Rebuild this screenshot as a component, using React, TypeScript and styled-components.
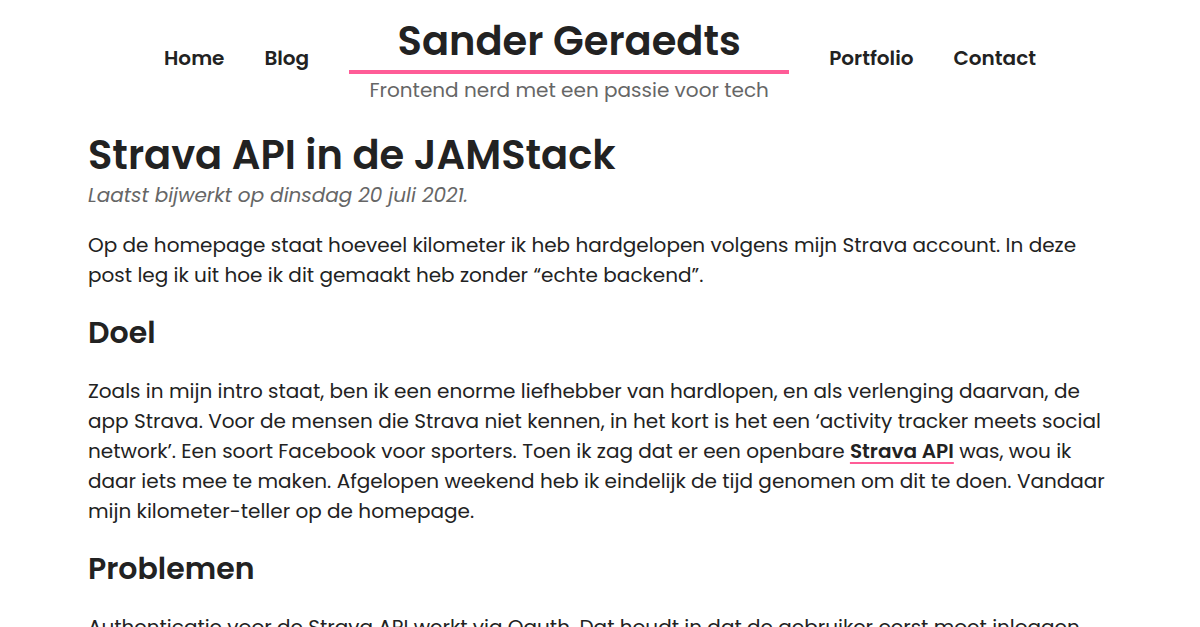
import React from "react";
import styled, { createGlobalStyle } from "styled-components";

const Global = createGlobalStyle`
  html, body { margin: 0; padding: 0; background: #fff; }
  body {
    font-family: "Poppins", "Open Sans", sans-serif;
    color: #222;
    -webkit-font-smoothing: antialiased;
  }
`;

const Header = styled.header`
  display: flex;
  justify-content: center;
  align-items: flex-start;
  gap: 40px;
  padding-top: 16px;
`;

const NavLink = styled.a`
  font-size: 20px;
  font-weight: 600;
  color: #222;
  text-decoration: none;
  line-height: 28px;
  margin-top: 28px;
`;

const Brand = styled.div`
  width: 440px;
  display: flex;
  flex-direction: column;
  align-items: center;
`;

const BrandTitle = styled.div`
  width: 100%;
  text-align: center;
  font-size: 40px;
  font-weight: 600;
  line-height: 50px;
  border-bottom: 4px solid #ff5c97;
  padding-bottom: 4px;
`;

const Tagline = styled.div`
  font-size: 20px;
  color: #666;
  line-height: 28px;
  margin-top: 2px;
`;

const Main = styled.main`
  max-width: 1024px;
  margin: 0 auto;
  padding-top: 26px;
`;

const Title = styled.h1`
  font-size: 40px;
  font-weight: 600;
  line-height: 50px;
  margin: 0;
`;

const Updated = styled.p`
  font-style: italic;
  color: #666;
  font-size: 20px;
  line-height: 30px;
  margin: 0 0 20px;
`;

const Para = styled.p`
  font-size: 20px;
  line-height: 30px;
  margin: 0 0 23px;
`;

const H2 = styled.h2`
  font-size: 30px;
  font-weight: 600;
  line-height: 40px;
  margin: 0 0 23px;
`;

const Link = styled.a`
  color: #222;
  font-weight: 600;
  text-decoration: underline;
  text-decoration-color: #ff5c97;
  text-decoration-thickness: 2px;
  text-underline-offset: 4px;
`;

export default function App() {
  return (
    <>
      <Global />
      <Header>
        <NavLink href="#">Home</NavLink>
        <NavLink href="#">Blog</NavLink>
        <Brand>
          <BrandTitle>Sander Geraedts</BrandTitle>
          <Tagline>Frontend nerd met een passie voor tech</Tagline>
        </Brand>
        <NavLink href="#">Portfolio</NavLink>
        <NavLink href="#">Contact</NavLink>
      </Header>
      <Main>
        <Title>Strava API in de JAMStack</Title>
        <Updated>Laatst bijwerkt op dinsdag 20 juli 2021.</Updated>
        <Para>
          Op de homepage staat hoeveel kilometer ik heb hardgelopen volgens mijn Strava account. In deze
          post leg ik uit hoe ik dit gemaakt heb zonder “echte backend”.
        </Para>
        <H2>Doel</H2>
        <Para>
          Zoals in mijn intro staat, ben ik een enorme liefhebber van hardlopen, en als verlenging daarvan, de
          app Strava. Voor de mensen die Strava niet kennen, in het kort is het een ‘activity tracker meets social
          network’. Een soort Facebook voor sporters. Toen ik zag dat er een openbare <Link href="#">Strava API</Link> was, wou ik
          daar iets mee te maken. Afgelopen weekend heb ik eindelijk de tijd genomen om dit te doen. Vandaar
          mijn kilometer-teller op de homepage.
        </Para>
        <H2>Problemen</H2>
        <Para>
          Authenticatie voor de Strava API werkt via Oauth. Dat houdt in dat de gebruiker eerst moet inloggen
        </Para>
      </Main>
    </>
  );
}
